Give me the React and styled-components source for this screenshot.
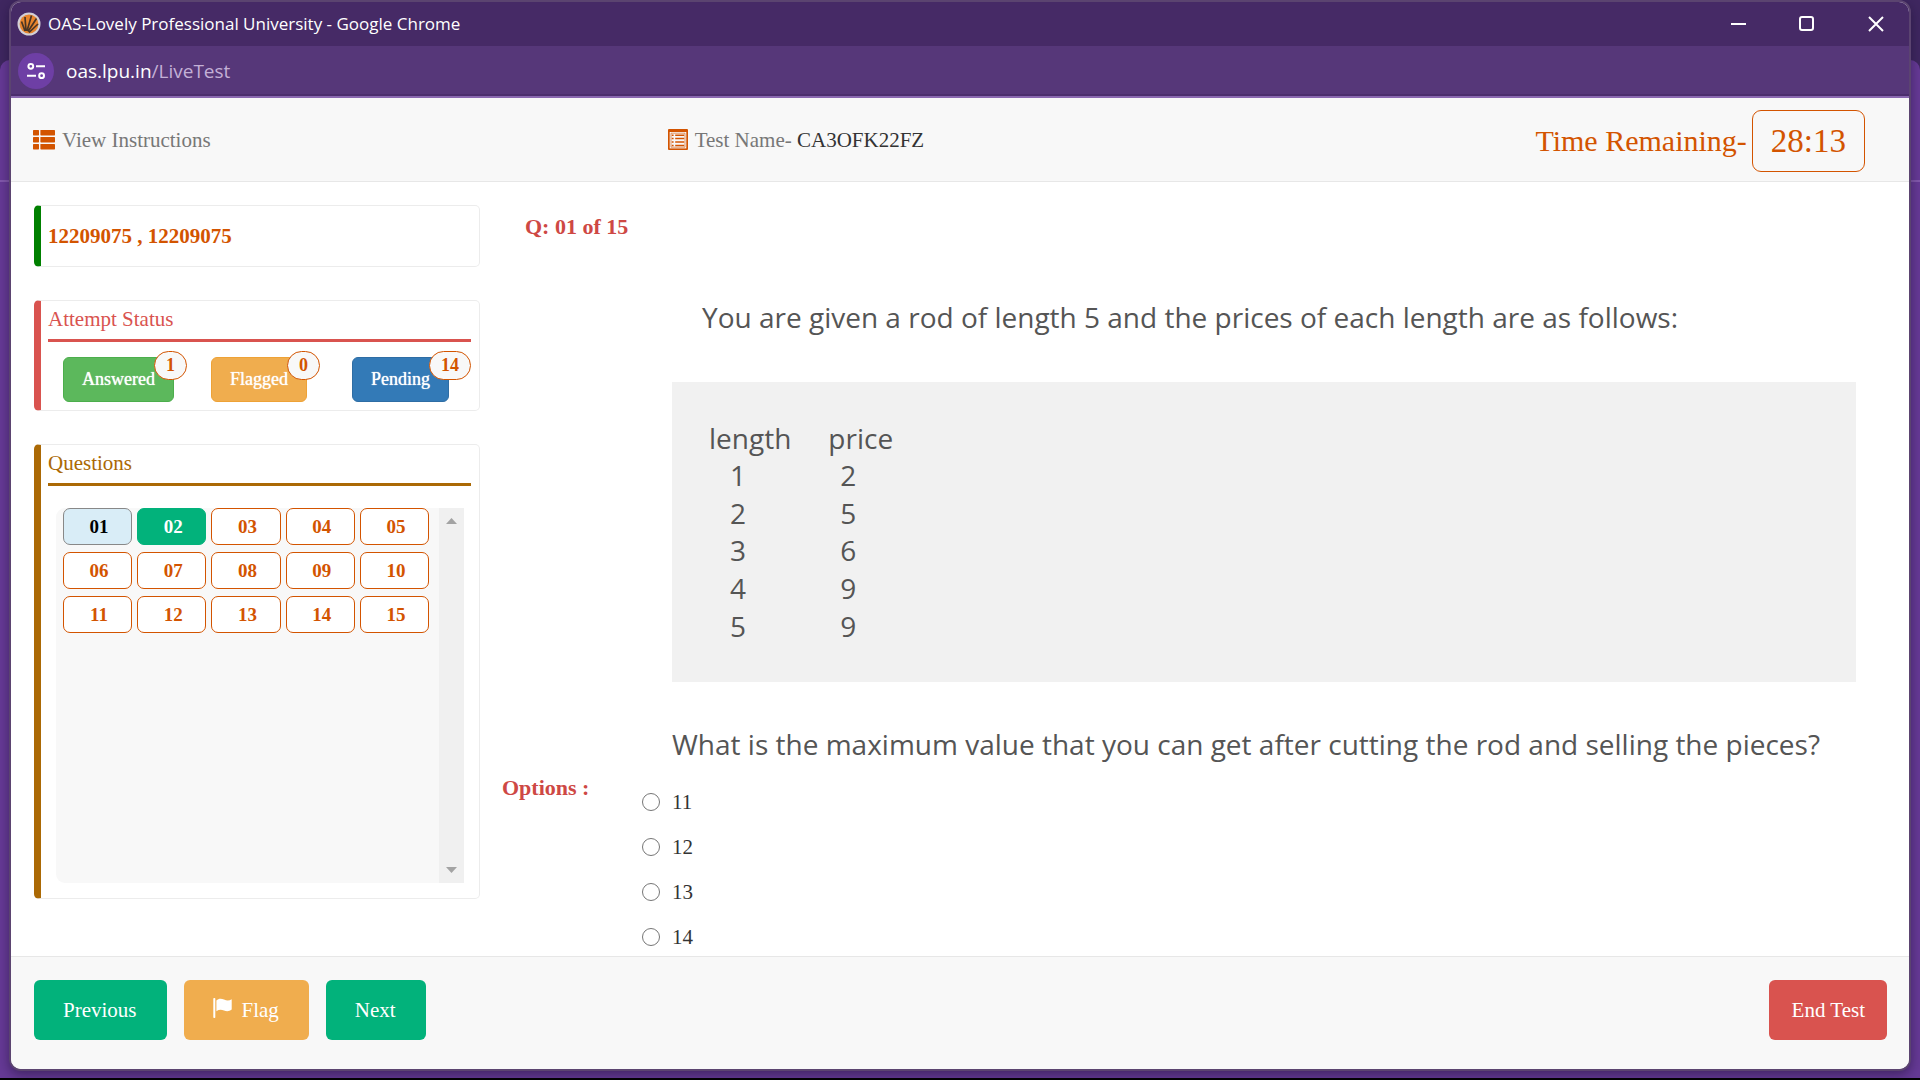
import React, { useState } from "react";
import styled, { createGlobalStyle, css } from "styled-components";

const serif = `"Liberation Serif", "Times New Roman", serif`;
const sans = `"Open Sans", "Noto Sans", sans-serif`;
const orange = "#d35400";

const GlobalStyle = createGlobalStyle`
  *, *::before, *::after { box-sizing: border-box; }
  body { margin: 0; background: #3f2760; font-family: ${serif}; font-size: 21px; line-height: 30px; color: #333; }
  button, input { font: inherit; }
  h1, h2, h3, p { margin: 0; font-weight: normal; font-size: inherit; }
`;

const Desktop = styled.div`
  position: relative;
  display: flex;
  min-height: 100vh;
  padding: 0 9px 9px;
  border-bottom: 2px solid #000;
  background: #3f2760;
  isolation: isolate;

  &::before {
    content: "";
    position: absolute;
    z-index: -1;
    inset: 60px 0 0;
    border-radius: 10px 10px 0 0;
    background: linear-gradient(#663a96 120px, #8359ad 120px, #8359ad 122px, #663a96 122px);
  }
`;

const Window = styled.div`
  display: flex;
  flex: 1;
  flex-direction: column;
  min-width: 0;
  margin-bottom: -2px;
  border: 2px solid #5b4470;
  border-radius: 12px;
  overflow: hidden;
  background: #fff;
  box-shadow: 0 4px 12px rgba(20, 10, 40, 0.45);
`;

const TitleBar = styled.div`
  display: flex;
  align-items: center;
  height: 44px;
  padding: 0 24px 0 6px;
  background: #462a66;
  color: #fff;
  font-family: ${sans};
  font-size: 17px;
`;

const WindowTitle = styled.h1`
  flex: 1;
  margin-left: 7px;
`;

const WindowControls = styled.div`
  display: flex;
  gap: 51px;
`;

const WindowButton = styled.button`
  display: flex;
  width: 18px;
  height: 18px;
  padding: 0;
  border: 0;
  background: none;
  color: #fff;
`;

const AddressBar = styled.div`
  display: flex;
  align-items: center;
  gap: 12px;
  height: 52px;
  padding: 0 7px;
  border-bottom: 2px solid #8a68b0;
  background: #563779;
  box-shadow: inset 0 -2px #4c2e6d;
`;

const SiteInfo = styled.button`
  display: grid;
  place-items: center;
  width: 36px;
  height: 36px;
  padding: 0;
  border: 0;
  border-radius: 50%;
  background: #6e3fa5;
  color: #fff;
`;

const Address = styled.div`
  color: #fff;
  font-family: ${sans};
  font-size: 19px;

  span { color: #c3b0d6; }
`;

const Header = styled.header`
  display: grid;
  grid-template-columns: repeat(3, 1fr);
  align-items: center;
  height: 84px;
  border-bottom: 1px solid #e7e7e7;
  background: #f8f8f8;
  color: #777;
`;

const HeaderCell = styled.div`
  display: flex;
  align-items: center;
  gap: 7px;
  padding: 0 22px 0 24px;

  strong { color: #333; font-weight: normal; }
`;

const InstructionsLink = styled.a`
  display: flex;
  align-items: center;
  gap: 7px;
  margin-left: -2px;
  color: #777;
  text-decoration: none;
`;

const TimerCell = styled(HeaderCell)`
  justify-content: flex-end;
  gap: 5px;
  padding-top: 2px;
  padding-right: 44px;
  color: ${orange};
  font-size: 30px;
`;

const Timer = styled.span`
  padding: 15px 18px;
  border: 1px solid ${orange};
  border-radius: 9px;
  font-size: 33px;
`;

const Body = styled.div`
  display: grid;
  flex: 1;
  grid-template-columns: 446px minmax(0, 1fr);
  align-items: start;
  gap: 22px;
  padding: 23px 53px 0 23px;
`;

const Sidebar = styled.aside`
  display: flex;
  flex-direction: column;
  gap: 33px;
`;

const Card = styled.section`
  padding: 0 8px 0 7px;
  border: 1px solid #ececec;
  border-left: 7px solid ${(p) => p.$accent};
  border-radius: 5px;
`;

const Candidate = styled.p`
  padding: 15px 0;
  color: ${orange};
  font-weight: bold;
`;

const CardTitle = styled.h2`
  padding: 3px 0 5px;
  border-bottom: 3px solid ${(p) => p.$color};
  color: ${(p) => p.$color};
`;

const StatusRow = styled.div`
  display: grid;
  grid-template-columns: 148px 141px auto;
  padding: 9px 0 8px 15px;
`;

const Status = styled.div`
  display: flex;
  align-items: flex-start;
`;

const StatusButton = styled.button`
  height: 45px;
  margin-top: 6px;
  padding: 0 18px 2px;
  border: 1px solid ${(p) => p.$edge};
  border-radius: 6px;
  background: ${(p) => p.$fill};
  color: #fff;
  font-size: 18px;
  text-shadow: 0 0 1px #fff;
`;

const StatusCount = styled.span`
  height: 29px;
  margin-left: -20px;
  padding: 0 11px;
  border: 1px solid ${orange};
  border-radius: 15px;
  background: #f8f8f8;
  color: ${orange};
  font-size: 18px;
  font-weight: bold;
  line-height: 27px;
`;

const QuestionBox = styled.div`
  display: flex;
  height: 375px;
  margin: 22px 7px 15px 8px;
  border-radius: 9px 0 0 9px;
  background: #f8f8f8;
`;

const QuestionGrid = styled.div`
  display: grid;
  flex: 1;
  grid-template-columns: repeat(5, 1fr);
  grid-auto-rows: 37px;
  gap: 7px 5px;
  padding: 0 10px 0 7px;
`;

const variants = {
  current: css`border-color: #888; background: #d9edf7; color: #000;`,
  answered: css`border-color: #02b27b; background: #02b27b; color: #fff;`,
  pending: css`border-color: ${orange}; background: #fff; color: ${orange};`,
};

const QuestionButton = styled.button`
  padding: 0 0 0 3px;
  border: 1px solid;
  border-radius: 7px;
  font-size: 19px;
  font-weight: bold;
  ${(p) => variants[p.$state]}
`;

const ScrollTrack = styled.div`
  display: flex;
  flex-direction: column;
  align-items: center;
  justify-content: space-between;
  width: 25px;
  padding: 10px 0;
  background: #f0f0f0;
  color: #a3a3a3;
`;

const Question = styled.main`
  display: flex;
  flex-direction: column;
`;

const SectionLabel = styled.h2`
  padding: ${(p) => (p.$indent ? "7px 0 0 23px" : "0")};
  color: #ce4844;
  font-size: 22px;
  font-weight: bold;
`;

const Prompt = styled.div`
  margin: 55px 0 0 170px;
  color: #555;
  font-family: ${sans};
  font-size: 28px;
  line-height: 40px;
`;

const Lead = styled.p`
  padding-left: 30px;
`;

const TableBox = styled.div`
  margin: 45px 0 42px;
  padding: 38px 37px 37px;
  background: #f1f1f1;
`;

const PriceTable = styled.table`
  height: 225px;
  border-collapse: collapse;
  line-height: 37px;

  th, td { padding: 0 37px 0 0; font-weight: normal; text-align: left; }
  td { padding-left: 21px; }
  td + td { padding-left: 12px; }
`;

const Options = styled.section`
  display: grid;
  grid-template-columns: 140px 1fr;
  margin-top: 9px;
`;

const OptionList = styled.div`
  display: flex;
  flex-direction: column;
  gap: 15px;
  padding-top: 14px;
`;

const Option = styled.label`
  display: flex;
  align-items: center;
  gap: 12px;

  input { width: 18px; height: 18px; margin: 0; }
`;

const Footer = styled.footer`
  display: flex;
  gap: 17px;
  padding: 23px 22px 29px 23px;
  border-top: 1px solid #e7e7e7;
  background: #f8f8f8;
`;

const ActionButton = styled.button`
  display: flex;
  align-items: center;
  gap: 10px;
  height: 60px;
  margin-left: ${(p) => (p.$end ? "auto" : "0")};
  padding: 0 ${(p) => (p.$end ? "22px 0 23px" : "30px 0 29px")};
  border: 0;
  border-radius: 6px;
  background: ${(p) => p.$fill};
  color: #fff;
`;

const Favicon = () => (
  <svg width="24" height="30" viewBox="0 0 24 30" aria-hidden="true">
    <circle cx="12" cy="15" r="11.5" fill="#d3cfd6" />
    <circle cx="12" cy="15" r="9.4" fill="#e8842c" />
    <path d="M8 22 4.500 12.500M9 22 8 8M10 22 14.500 6.500M11 22.500 19.500 9.500M12 23.500 21 15" stroke="#4a3524" strokeWidth="1.7" />
  </svg>
);

const TuneIcon = () => (
  <svg width="18" height="18" viewBox="0 0 18 18" fill="none" stroke="currentColor" strokeWidth="2" aria-hidden="true">
    <circle cx="3.8" cy="4.3" r="2.4" />
    <path d="M9 4.300h9M0 13.700h9" />
    <circle cx="14.6" cy="13.700" r="2.4" />
  </svg>
);

const ListIcon = () => (
  <svg width="22" height="20" viewBox="0 0 22 20" fill={orange} aria-hidden="true">
    {[0, 7, 14].map((y) => (
      <g key={y}>
        <rect y={y} width="6" height="5.4" rx="0.6" />
        <rect x="7.4" y={y} width="14.6" height="5.4" rx="0.6" />
      </g>
    ))}
  </svg>
);

const SheetIcon = () => (
  <svg width="20" height="21" viewBox="0 0 20 21" aria-hidden="true">
    <rect width="20" height="21" rx="1" fill={orange} />
    <rect x="1.7" y="3" width="16.6" height="16.4" fill="#f8f8f8" />
    <path d="M3 4.2h14v14H3z" fill="none" stroke={orange} strokeWidth="0.6" />
    <path d="M3.8 6.2h1.8m1.6 0h9M3.8 9.6h1.8m1.6 0h9M3.8 13h1.8m1.6 0h9M3.8 16.4h1.8m1.6 0h9" stroke={orange} strokeWidth="1.5" />
  </svg>
);

const FlagIcon = () => (
  <svg width="19" height="30" viewBox="0 0 19 30" fill="#fff" aria-hidden="true">
    <rect x="0.3" y="3" width="2" height="20" rx="0.8" />
    <path d="M3.4 5.5C5.5 3.6 8 3.4 11 4.6c3 1.200 5 1.200 7.700-.3V14.500c-2.500 2-5 2-7.700 1-3-1.100-5.200-.9-7.600.8z" />
  </svg>
);

const Arrow = ({ down }) => (
  <svg width="11" height="6" viewBox="0 0 11 6" fill="currentColor" aria-hidden="true">
    <path d={down ? "M0 0h11L5.500 6z" : "M0 6h11L5.500 0z"} />
  </svg>
);

const ControlIcon = ({ children }) => (
  <svg width="18" height="18" viewBox="0 0 18 18" fill="none" stroke="currentColor" strokeWidth="2" aria-hidden="true">
    {children}
  </svg>
);

const statuses = [
  { name: "Answered", count: 1, fill: "#5cb85c", edge: "#4cae4c" },
  { name: "Flagged", count: 0, fill: "#f0ad4e", edge: "#eea236" },
  { name: "Pending", count: 14, fill: "#337ab7", edge: "#2e6da4" },
];
const questions = Array.from({ length: 15 }, (_, i) => String(i + 1).padStart(2, "0"));
const prices = [[1, 2], [2, 5], [3, 6], [4, 9], [5, 9]];
const choices = ["11", "12", "13", "14"];

function stateOf(number) {
  if (number === "01") return "current";
  if (number === "02") return "answered";
  return "pending";
}

export default function App() {
  const [choice, setChoice] = useState(null);

  return (
    <Desktop>
      <GlobalStyle />
      <Window>
        <TitleBar>
          <Favicon />
          <WindowTitle>OAS-Lovely Professional University - Google Chrome</WindowTitle>
          <WindowControls>
            <WindowButton aria-label="Minimize">
              <ControlIcon><path d="M2 9h15" /></ControlIcon>
            </WindowButton>
            <WindowButton aria-label="Maximize">
              <ControlIcon><rect x="2" y="2" width="13" height="13" rx="2" /></ControlIcon>
            </WindowButton>
            <WindowButton aria-label="Close">
              <ControlIcon><path d="m2 2 14 14M16 2 2 16" /></ControlIcon>
            </WindowButton>
          </WindowControls>
        </TitleBar>
        <AddressBar>
          <SiteInfo aria-label="View site information"><TuneIcon /></SiteInfo>
          <Address>oas.lpu.in<span>/LiveTest</span></Address>
        </AddressBar>

        <Header>
          <HeaderCell>
            <InstructionsLink href="#instructions"><ListIcon />View Instructions</InstructionsLink>
          </HeaderCell>
          <HeaderCell>
            <SheetIcon />
            <span>Test Name- <strong>CA3OFK22FZ</strong></span>
          </HeaderCell>
          <TimerCell>
            <span>Time Remaining-</span>
            <Timer>28:13</Timer>
          </TimerCell>
        </Header>

        <Body>
          <Sidebar>
            <Card $accent="#008000">
              <Candidate>12209075 , 12209075</Candidate>
            </Card>
            <Card $accent="#d9534f">
              <CardTitle $color="#d9534f">Attempt Status</CardTitle>
              <StatusRow>
                {statuses.map((s) => (
                  <Status key={s.name}>
                    <StatusButton $fill={s.fill} $edge={s.edge}>{s.name}</StatusButton>
                    <StatusCount>{s.count}</StatusCount>
                  </Status>
                ))}
              </StatusRow>
            </Card>
            <Card $accent="#ab6905">
              <CardTitle $color="#ab6905">Questions</CardTitle>
              <QuestionBox>
                <QuestionGrid>
                  {questions.map((n) => (
                    <QuestionButton key={n} $state={stateOf(n)}>{n}</QuestionButton>
                  ))}
                </QuestionGrid>
                <ScrollTrack><Arrow /><Arrow down /></ScrollTrack>
              </QuestionBox>
            </Card>
          </Sidebar>

          <Question>
            <SectionLabel $indent>Q: 01 of 15</SectionLabel>
            <Prompt>
              <Lead>You are given a rod of length 5 and the prices of each length are as follows:</Lead>
              <TableBox>
                <PriceTable>
                  <thead>
                    <tr><th>length</th><th>price</th></tr>
                  </thead>
                  <tbody>
                    {prices.map(([length, price]) => (
                      <tr key={length}><td>{length}</td><td>{price}</td></tr>
                    ))}
                  </tbody>
                </PriceTable>
              </TableBox>
              <p>What is the maximum value that you can get after cutting the rod and selling the pieces?</p>
            </Prompt>
            <Options>
              <SectionLabel>Options :</SectionLabel>
              <OptionList>
                {choices.map((c) => (
                  <Option key={c}>
                    <input type="radio" name="answer" value={c} checked={choice === c} onChange={() => setChoice(c)} />
                    {c}
                  </Option>
                ))}
              </OptionList>
            </Options>
          </Question>
        </Body>

        <Footer>
          <ActionButton $fill="#02b27b">Previous</ActionButton>
          <ActionButton $fill="#f0ad4e"><FlagIcon />Flag</ActionButton>
          <ActionButton $fill="#02b27b">Next</ActionButton>
          <ActionButton $fill="#d9534f" $end>End Test</ActionButton>
        </Footer>
      </Window>
    </Desktop>
  );
}
